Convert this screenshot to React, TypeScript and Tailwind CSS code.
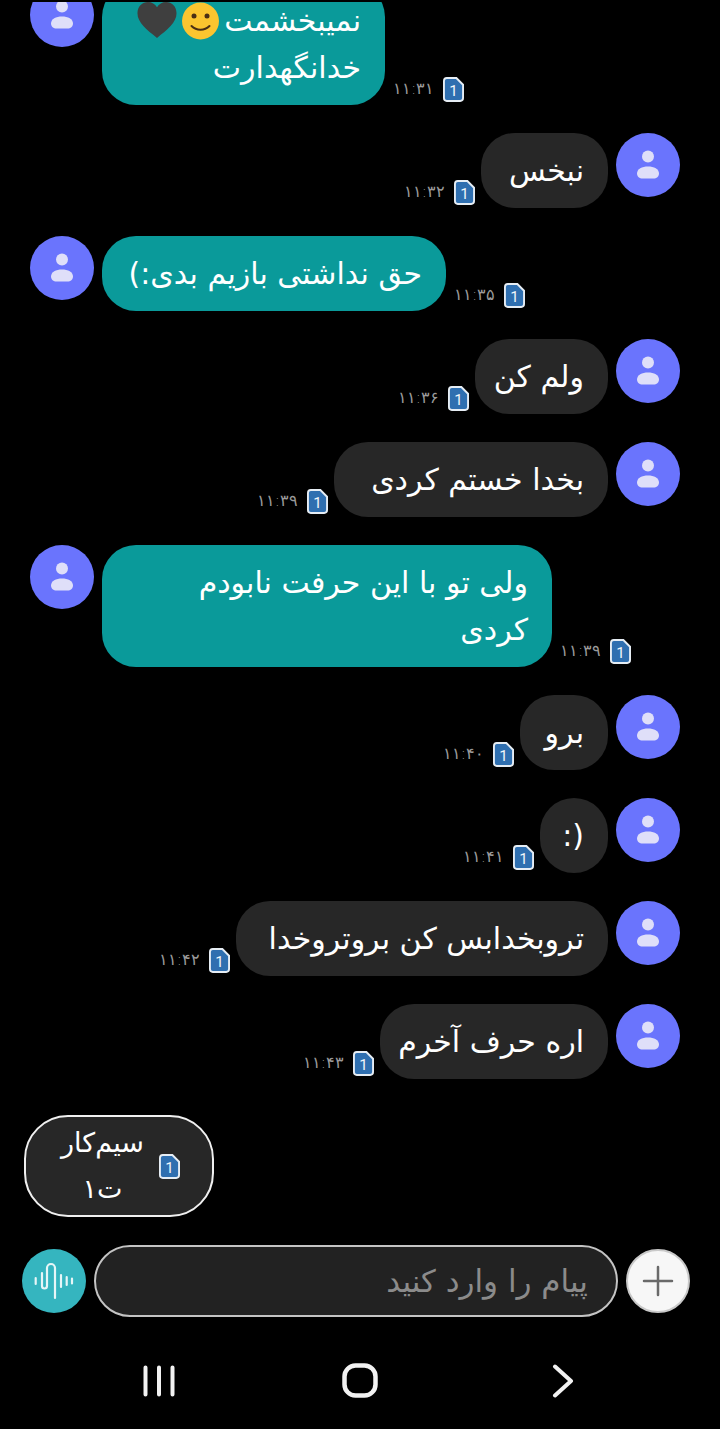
const font = { fontFamily: '"DejaVu Sans", "Noto Sans", sans-serif' };

type Msg = {
  text: string[];
  time: string;
  mine?: boolean;
  width: number;
  emoji?: boolean;
};

const messages: Msg[] = [
  { text: ["نمیبخشمت", "خدانگهدارت"], time: "۱۱:۳۱", width: 283, emoji: true },
  { text: ["نبخس"], time: "۱۱:۳۲", mine: true, width: 127 },
  { text: ["حق نداشتی بازیم بدی:)"], time: "۱۱:۳۵", width: 344 },
  { text: ["ولم کن"], time: "۱۱:۳۶", mine: true, width: 133 },
  { text: ["بخدا خستم کردی"], time: "۱۱:۳۹", mine: true, width: 274 },
  { text: ["ولی تو با این حرفت نابودم", "کردی"], time: "۱۱:۳۹", width: 450 },
  { text: ["برو"], time: "۱۱:۴۰", mine: true, width: 88 },
  { text: ["\u200E:)\u200E"], time: "۱۱:۴۱", mine: true, width: 68 },
  { text: ["تروبخدابس کن بروتروخدا"], time: "۱۱:۴۲", mine: true, width: 372 },
  { text: ["اره حرف آخرم"], time: "۱۱:۴۳", mine: true, width: 228 },
];

function Avatar() {
  return (
    <div className="flex h-16 w-16 shrink-0 items-center justify-center rounded-full bg-[#6a74fd]">
      <svg width="24" height="30" viewBox="0 0 24 30">
        <circle cx="12" cy="6.500" r="6" fill="#dfdff9" />
        <path d="M1 23.500c0-4.500 5-7 11-7s11 2.500 11 7c0 3-2.500 5-5.500 5h-11c-3 0-5.500-2-5.500-5z" fill="#dfdff9" />
      </svg>
    </div>
  );
}

function SimIcon() {
  return (
    <svg width="21" height="25" viewBox="0 0 22 26" className="shrink-0">
      <path
        d="M4 1h10l7 7v14a3 3 0 0 1-3 3H4a3 3 0 0 1-3-3V4a3 3 0 0 1 3-3z"
        fill="#2f6fb0"
        stroke="#e6edf4"
        strokeWidth="2"
      />
      <text x="11" y="19.500" textAnchor="middle" fontSize="16" fill="#f2f6fa" fontFamily="Roboto, sans-serif">
        1
      </text>
    </svg>
  );
}

function Stamp({ time }: { time: string }) {
  return (
    <div className="mb-[3px] flex shrink-0 items-center gap-[9px]">
      <span className="text-[15.5px] font-extralight leading-none text-[#9a9a9a]" style={font}>
        {time}
      </span>
      <SimIcon />
    </div>
  );
}

function Emoji() {
  return (
    <span className="mr-1 flex items-center gap-[3px]">
      <svg width="39" height="38" viewBox="0 0 38 38">
        <circle cx="19" cy="19" r="18.500" fill="#fbc52f" />
        <circle cx="12.500" cy="14" r="2.500" fill="#4a2f14" />
        <circle cx="25.500" cy="14" r="2.500" fill="#4a2f14" />
        <path d="M10 24c5 5 13 5 18 0" stroke="#4a2f14" strokeWidth="2" fill="none" strokeLinecap="round" />
      </svg>
      <svg width="42" height="37" viewBox="0 0 40 36">
        <path
          d="M20 35 C10 27 1 20 1 11 C1 4 6 0 11 0 C15 0 18 2 20 5 C22 2 25 0 29 0 C34 0 39 4 39 11 C39 20 30 27 20 35z"
          fill="#3f3f3f"
        />
      </svg>
    </span>
  );
}

function Bubble({ msg }: { msg: Msg }) {
  return (
    <div
      dir="rtl"
      className={`shrink-0 rounded-[34px] py-[14px] pl-5 pr-6 text-[30px] leading-[47px] text-white ${
        msg.mine ? "bg-[#272727]" : "bg-[#0a9a9a]"
      }`}
      style={{ ...font, width: msg.width }}
    >
      {msg.text.map((line, i) => (
        <div key={line} className="flex items-center whitespace-nowrap">
          {line}
          {msg.emoji && i === 0 ? <Emoji /> : null}
        </div>
      ))}
    </div>
  );
}

function Row({ msg }: { msg: Msg }) {
  if (msg.mine) {
    return (
      <div className="flex shrink-0 items-start justify-end gap-2 pr-10">
        <div className="flex items-end gap-1.5">
          <Stamp time={msg.time} />
          <Bubble msg={msg} />
        </div>
        <Avatar />
      </div>
    );
  }
  return (
    <div className="flex shrink-0 items-start gap-2 pl-[30px]">
      <Avatar />
      <div className="flex items-end gap-2">
        <Bubble msg={msg} />
        <Stamp time={msg.time} />
      </div>
    </div>
  );
}

function MicWave() {
  return (
    <svg width="64" height="64" viewBox="0 0 64 64" fill="none" stroke="#e6f6f7" strokeWidth="2.200" strokeLinecap="round">
      <path d="M13.700 29v6M39 26v12M44.700 28v8M50 29.500v5" />
      <path d="M20 24v13a2.500 2.500 0 0 0 5 0V19a4 4 0 0 1 8 0v30" />
    </svg>
  );
}

export default function App() {
  return (
    <div className="flex h-[1429px] w-[720px] flex-col overflow-hidden bg-black">
      <div className="mt-[2px] flex h-[1077px] flex-col justify-end gap-7 overflow-hidden">
        {messages.map((m) => (
          <Row key={m.time + m.text[0]} msg={m} />
        ))}
      </div>

      <div className="mt-9 flex pl-6">
        <div
          dir="rtl"
          className="flex h-[102px] w-[190px] items-center gap-3 rounded-[44px] border-2 border-[#f0f0f0] bg-[#272727] pl-8 pr-8 text-[27px] leading-[46px] text-white"
          style={font}
        >
          <SimIcon />
          <div className="flex-1 text-center">
            <div className="whitespace-nowrap">سیم‌کار</div>
            <div>ت۱</div>
          </div>
        </div>
      </div>

      <div className="mt-7 flex items-center pl-[22px]">
        <div className="flex h-16 w-16 items-center justify-center rounded-full bg-[#35b5bf]">
          <MicWave />
        </div>
        <div
          dir="rtl"
          className="ml-2 flex h-[72px] w-[524px] items-center rounded-full border-2 border-[#c4c4c4] bg-[#222222] px-[28px] text-[31px] text-[#8b8b8b]"
          style={font}
        >
          پیام را وارد کنید
        </div>
        <div className="ml-2 flex h-16 w-16 items-center justify-center rounded-full border-2 border-[#c9c9c9] bg-[#f7f7f7]">
          <svg width="32" height="32" viewBox="0 0 32 32" stroke="#6a6a6a" strokeWidth="2.500" strokeLinecap="round">
            <path d="M16 2v28M2 16h28" />
          </svg>
        </div>
      </div>

      <div className="mt-[46px] flex items-center pl-[143px]">
        <svg width="32" height="32" viewBox="0 0 32 32" stroke="#f2f2f2" strokeWidth="4" strokeLinecap="round">
          <path d="M2.500 2.500v27M16 2.500v27M29.500 2.500v27" />
        </svg>
        <svg className="ml-[167px]" width="36" height="35" viewBox="0 0 36 35" fill="none" stroke="#f2f2f2" strokeWidth="4.500">
          <rect x="2.500" y="2.500" width="31" height="30" rx="11" />
        </svg>
        <svg className="ml-[174px]" width="22" height="34" viewBox="0 0 22 34" fill="none" stroke="#f2f2f2" strokeWidth="4" strokeLinecap="round" strokeLinejoin="round">
          <path d="M3 2.500 19 17 3 31.500" />
        </svg>
      </div>
    </div>
  );
}
